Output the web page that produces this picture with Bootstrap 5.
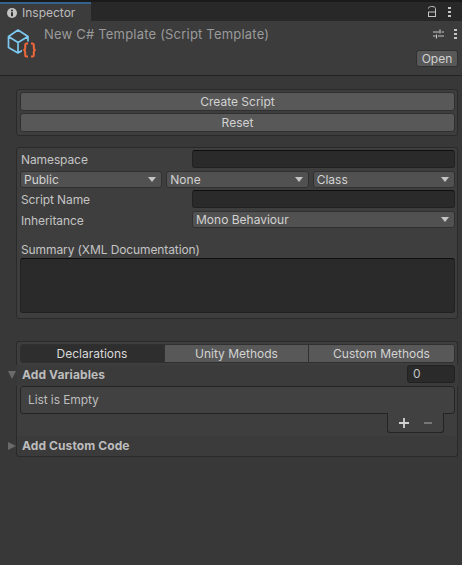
<!DOCTYPE html>
<html lang="en">
<head>
  <meta charset="UTF-8" />
  <title>Inspector</title>
  <link href="https://cdn.jsdelivr.net/npm/bootstrap@5.3.3/dist/css/bootstrap.min.css" rel="stylesheet">
  <style>
    html, body { height: 100%; }
    body { background: #383838; color: #c4c4c4; font-family: Inter, "Noto Sans", sans-serif; font-size: 12px; line-height: 14px; width: 462px; height: 565px; overflow: hidden; }
    .tab-strip { height: 21px; background: #282828; border-top: 2px solid #1a1a1a; }
    .tab-active { width: 91px; background: #3c3c3c; border-top: 2px solid #34628f; padding-left: 7px; color: #bdbdbd; }
    .tab-active span { margin-left: 5px; }
    .tab-tools { padding-right: 11px; gap: 12px; color: #c4c4c4; }
    .file-head { height: 55px; background: #3c3c3c; border-bottom: 1px solid #232323; position: relative; }
    .file-title { padding: 6px 0 0 44px; color: #9a9a9a; font-size: 13px; letter-spacing: .2px; }
    .file-icon { position: absolute; left: 7px; top: 7px; }
    .head-tools { position: absolute; right: 5px; top: 8px; gap: 10px; }
    .open-btn { position: absolute; right: 4px; top: 29px; width: 42px; height: 17px; background: #585858; border: 1px solid #303030; border-radius: 3px; color: #d2d2d2; text-align: center; line-height: 15px; }
    .pane { margin: 0 4px 0 16px; border: 1px solid #2a2a2a; border-radius: 3px; background: #3e3e3e; padding: 2px 2px 2px 3px; }
    .pane-btns { margin-top: 13px; height: 47px; }
    .pane-form { margin-top: 11px; height: 172px; }
    .uni-btn { height: 19px; background: #585858; border: 1px solid #303030; border-radius: 3px; color: #d2d2d2; text-align: center; line-height: 17px; margin-bottom: 2px; }
    .uni-row { height: 21px; }
    .uni-row.tight { height: 19px; }
    .uni-row.loose { height: 32px; }
    .uni-label { width: 172px; padding: 3px 0 0 1px; color: #c4c4c4; flex: none; letter-spacing: -.1px; }
    .uni-input { flex: 1; height: 18px; background: #2a2a2a; border: 1px solid #212121; border-top-color: #0f0f0f; border-radius: 3px; }
    .uni-popup { height: 17px; background: #515151; border: 1px solid #303030; border-radius: 3px; color: #d2d2d2; padding: 0 5px 1px 3px; line-height: 15px; }
    .caret-down { width: 0; height: 0; border-left: 4px solid transparent; border-right: 4px solid transparent; border-top: 5px solid #c4c4c4; }
    .summary-label { height: 15px; padding-top: 0; }
    .summary-box { height: 55px; background: #2a2a2a; border: 1px solid #212121; border-top-color: #0f0f0f; border-radius: 3px; }
    .pane-lists { margin: 22px 4px 0 16px; background: #3e3e3e; border: 1px solid #2a2a2a; border-width: 1px 1px 0 1px; border-radius: 3px 3px 0 0; padding: 2px 2px 0 3px; height: 24px; }
    .seg-wrap { height: 19px; border: 1px solid #303030; border-radius: 3px; overflow: hidden; }
    .seg-item { background: #585858; color: #d2d2d2; text-align: center; line-height: 17px; border-left: 1px solid #303030; }
    .seg-item.on { background: #2e2e2e; border-left: 0; color: #d8d8d8; width: 143px; flex: none; padding-right: 1px; }
    .seg-item.mid { width: 144px; flex: none; }
    .fold-row { height: 21px; }
    .fold-slot { width: 17px; flex: none; padding-left: 8px; }
    .fold-body { margin-right: 4px; padding: 0 3px 0 5px; background: #3b3b3b; font-weight: 700; color: #bdbdbd; letter-spacing: .1px; line-height: 20px; }
    .fold-down { display: block; width: 0; height: 0; margin-top: 6px; border-left: 4.5px solid transparent; border-right: 4.5px solid transparent; border-top: 8px solid #6a6a6a; }
    .fold-right { display: block; width: 0; height: 0; margin-top: 6px; border-top: 4.5px solid transparent; border-bottom: 4.5px solid transparent; border-left: 8px solid #6a6a6a; }
    .count-box { width: 48px; height: 18px; background: #2a2a2a; border: 1px solid #212121; border-radius: 3px; padding-left: 5px; line-height: 16px; font-weight: 400; color: #c4c4c4; letter-spacing: 0; }
    .list-area { margin: 0 4px 0 16px; background: #3e3e3e; border-left: 1px solid #2a2a2a; border-right: 1px solid #2a2a2a; padding: 0 2px 0 3px; height: 50px; position: relative; }
    .list-box { height: 28px; background: #414141; border: 1px solid #242424; border-radius: 3px; padding-left: 7px; line-height: 26px; color: #bdbdbd; letter-spacing: -.1px; }
    .list-foot { position: absolute; right: 13px; top: 27px; width: 57px; height: 20px; border: 1px solid #242424; border-top: 0; border-radius: 0 0 3px 3px; background: #414141; gap: 15px; }
    .fold-last .fold-body { line-height: 20px; border-bottom: 1px solid #2a2a2a; border-left: 1px solid #2a2a2a; border-right: 1px solid #2a2a2a; padding-left: 5px; margin-left: -1px; border-radius: 0 0 3px 3px; }
  </style>
</head>
<body>
  <div class="tab-strip d-flex justify-content-between">
    <div class="tab-active d-flex align-items-center">
      <svg width="10" height="10" viewBox="0 0 10 10"><circle cx="5" cy="5" r="5" fill="#c4c4c4"/><rect x="4" y="4.200" width="2" height="4" fill="#333"/><rect x="4" y="1.700" width="2" height="1.600" fill="#333"/></svg>
      <span>Inspector</span>
    </div>
    <div class="tab-tools d-flex align-items-center">
      <svg width="8" height="11" viewBox="0 0 8 11"><path d="M.5 2.500C.5 1.200 1.700 .5 3.700 .5S7.500 1.200 7.500 2.500V6" fill="none" stroke="#c4c4c4"/><rect x=".5" y="6" width="7" height="4.500" fill="none" stroke="#c4c4c4"/></svg>
      <svg width="3" height="10" viewBox="0 0 3 10"><rect width="3" height="2" fill="#c4c4c4"/><rect y="4" width="3" height="2" fill="#c4c4c4"/><rect y="8" width="3" height="2" fill="#c4c4c4"/></svg>
    </div>
  </div>

  <div class="file-head">
    <svg class="file-icon" width="30" height="30" viewBox="0 0 30 30">
      <path d="M11 2L1.500 8.500V19.500L11 25L21 19V8.500ZM1.500 8.500L11 14.500L21 8.500M11 14.500V25" fill="none" stroke="#7cc8ee" stroke-width="1.700" stroke-linejoin="round"/>
      <rect x="15" y="13.500" width="15" height="16" fill="#3c3c3c"/>
      <path d="M21 15.500H19.500C18.500 15.500 18.200 16 18.200 17V20.200C18.200 21.200 17.700 21.800 16.500 22C17.700 22.200 18.200 22.800 18.200 23.800V27C18.200 28 18.500 28.500 19.500 28.500H21" fill="none" stroke="#f0683c" stroke-width="2"/>
      <path d="M24 15.500H25.500C26.500 15.500 26.800 16 26.800 17V20.200C26.800 21.200 27.300 21.800 28.500 22C27.300 22.200 26.800 22.800 26.800 23.800V27C26.800 28 26.500 28.500 25.500 28.500H24" fill="none" stroke="#f0683c" stroke-width="2"/>
    </svg>
    <div class="file-title">New C# Template (Script Template)</div>
    <div class="head-tools d-flex align-items-center">
      <svg width="11" height="10" viewBox="0 0 11 10"><path d="M0 3H6M8.500 3H11M0 7H2.500M5 7H11M7 .5V4.500M3.500 5.500V9.500" stroke="#c4c4c4" stroke-width="1.200" fill="none"/></svg>
      <svg width="3" height="10" viewBox="0 0 3 10"><rect width="3" height="2" fill="#c4c4c4"/><rect y="4" width="3" height="2" fill="#c4c4c4"/><rect y="8" width="3" height="2" fill="#c4c4c4"/></svg>
    </div>
    <div class="open-btn">Open</div>
  </div>

  <div class="pane pane-btns">
    <div class="uni-btn">Create Script</div>
    <div class="uni-btn">Reset</div>
  </div>

  <div class="pane pane-form">
    <div class="uni-row d-flex align-items-start">
      <div class="uni-label">Namespace</div>
      <div class="uni-input"></div>
    </div>
    <div class="uni-row tight d-flex gap-1">
      <div class="uni-popup d-flex justify-content-between align-items-center w-100">Public<i class="caret-down"></i></div>
      <div class="uni-popup d-flex justify-content-between align-items-center w-100">None<i class="caret-down"></i></div>
      <div class="uni-popup d-flex justify-content-between align-items-center w-100">Class<i class="caret-down"></i></div>
    </div>
    <div class="uni-row d-flex align-items-start">
      <div class="uni-label">Script Name</div>
      <div class="uni-input"></div>
    </div>
    <div class="uni-row loose d-flex align-items-start">
      <div class="uni-label">Inheritance</div>
      <div class="uni-popup d-flex justify-content-between align-items-center flex-fill">Mono Behaviour<i class="caret-down"></i></div>
    </div>
    <div class="uni-label w-100 summary-label">Summary (XML Documentation)</div>
    <div class="summary-box"></div>
  </div>

  <div class="pane-lists">
    <div class="seg-wrap d-flex">
      <div class="seg-item on">Declarations</div>
      <div class="seg-item mid">Unity Methods</div>
      <div class="seg-item flex-fill">Custom Methods</div>
    </div>
  </div>
  <div class="fold-row d-flex">
    <div class="fold-slot"><i class="fold-down"></i></div>
    <div class="fold-body flex-fill d-flex justify-content-between">
      Add Variables
      <div class="count-box">0</div>
    </div>
  </div>
  <div class="list-area">
    <div class="list-box">List is Empty</div>
    <div class="list-foot d-flex justify-content-center align-items-center">
      <svg width="10" height="10" viewBox="0 0 10 10"><path d="M5 0V10M0 5H10" stroke="#d2d2d2" stroke-width="1.800"/></svg>
      <svg width="8" height="10" viewBox="0 0 8 10"><path d="M0 5H8" stroke="#7d7d7d" stroke-width="1.800"/></svg>
    </div>
  </div>
  <div class="fold-row fold-last d-flex">
    <div class="fold-slot"><i class="fold-right"></i></div>
    <div class="fold-body flex-fill">Add Custom Code</div>
  </div>

  <script src="https://cdn.jsdelivr.net/npm/bootstrap@5.3.3/dist/js/bootstrap.bundle.min.js"></script>
</body>
</html>
